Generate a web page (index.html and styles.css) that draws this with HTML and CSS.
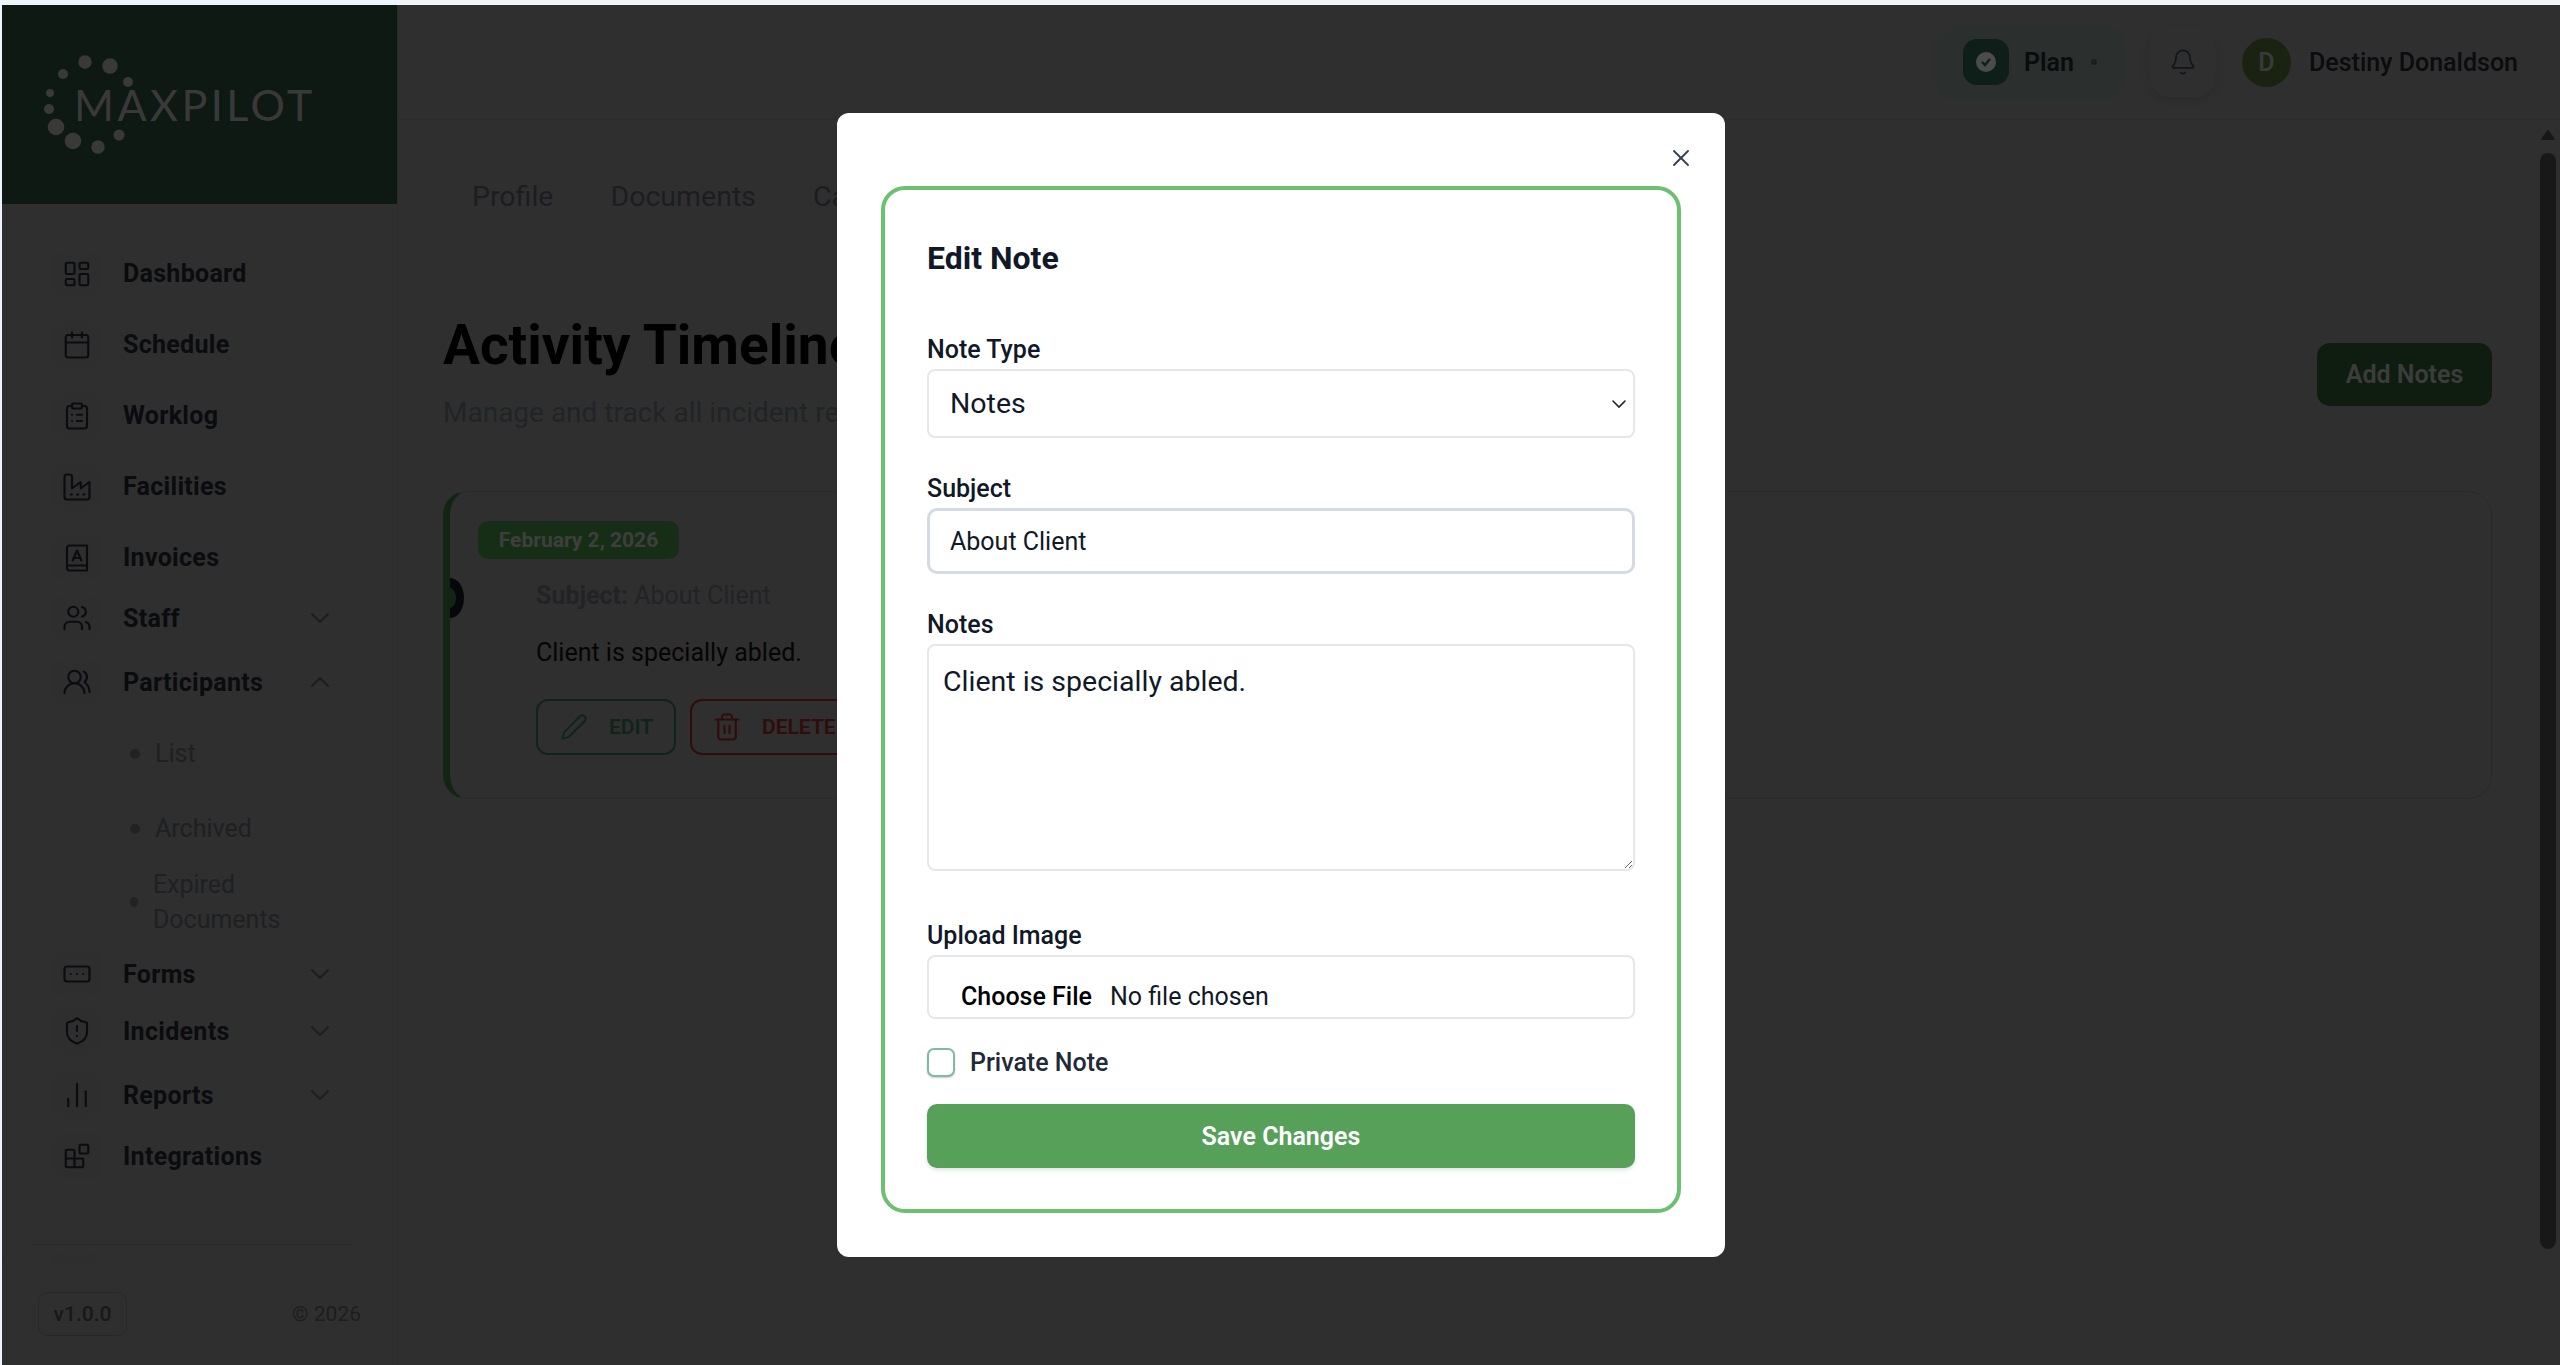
FILE: index.html
```html
<!DOCTYPE html>
<html>
<head>
    <title>MaxPilot - Activity Timeline</title>
    <link rel="stylesheet" href="styles.css">
</head>
<body>
    <div class="app">
        <aside class="sidebar">
            <div class="logo">
                <svg class="logo-dots" viewBox="40 54 96 102" fill="currentColor">
                    <circle cx="85" cy="62" r="6.7"/><circle cx="110" cy="66" r="7.7"/><circle cx="128" cy="82" r="5"/>
                    <circle cx="63" cy="74" r="5"/><circle cx="50" cy="93" r="4"/><circle cx="49" cy="109" r="5"/>
                    <circle cx="56" cy="127" r="8.3"/><circle cx="73" cy="141" r="8.3"/><circle cx="98" cy="147" r="6.7"/>
                    <circle cx="119" cy="135" r="5.5"/>
                </svg>
                <span class="logo-text">MAXPILOT</span>
            </div>
            <nav class="nav">
                <a class="nav-item">
                    <span class="nav-icon"><svg viewBox="0 0 24 24"><rect x="3" y="3" width="7" height="9" rx="1"/><rect x="14" y="3" width="7" height="5" rx="1"/><rect x="14" y="12" width="7" height="9" rx="1"/><rect x="3" y="16" width="7" height="5" rx="1"/></svg></span>
                    Dashboard
                </a>
                <a class="nav-item">
                    <span class="nav-icon"><svg viewBox="0 0 24 24"><path d="M8 2v4"/><path d="M16 2v4"/><rect x="3" y="4" width="18" height="18" rx="2"/><path d="M3 10h18"/></svg></span>
                    Schedule
                </a>
                <a class="nav-item">
                    <span class="nav-icon"><svg viewBox="0 0 24 24"><rect x="8" y="2" width="8" height="4" rx="1"/><path d="M16 4h2a2 2 0 0 1 2 2v14a2 2 0 0 1-2 2H6a2 2 0 0 1-2-2V6a2 2 0 0 1 2-2h2"/><path d="M12 11h4"/><path d="M12 16h4"/><path d="M8 11h.01"/><path d="M8 16h.01"/></svg></span>
                    Worklog
                </a>
                <a class="nav-item">
                    <span class="nav-icon"><svg viewBox="0 0 24 24"><path d="M2 20a2 2 0 0 0 2 2h16a2 2 0 0 0 2-2V8l-7 5V8l-7 5V4a2 2 0 0 0-2-2H4a2 2 0 0 0-2 2Z"/><path d="M17 18h1"/><path d="M12 18h1"/><path d="M7 18h1"/></svg></span>
                    Facilities
                </a>
                <a class="nav-item">
                    <span class="nav-icon"><svg viewBox="0 0 24 24"><path d="M4 4a2 2 0 0 1 2-2h14v20H6a2 2 0 0 1-2-2Z"/><path d="M4 18h16"/><path d="m8.500 14 3.500-8 3.500 8"/><path d="M9.800 12h4.400"/></svg></span>
                    Invoices
                </a>
                <a class="nav-item nav-group">
                    <span class="nav-icon nav-icon-box"><svg viewBox="0 0 24 24"><path d="M16 21v-2a4 4 0 0 0-4-4H6a4 4 0 0 0-4 4v2"/><circle cx="9" cy="7" r="4"/><path d="M22 21v-2a4 4 0 0 0-3-3.870"/><path d="M16 3.130a4 4 0 0 1 0 7.750"/></svg></span>
                    Staff
                    <svg class="chevron" viewBox="0 0 24 24"><path d="m6 9 6 6 6-6"/></svg>
                </a>
                <a class="nav-item nav-group mt-16">
                    <span class="nav-icon nav-icon-box"><svg viewBox="0 0 24 24"><path d="M18 21a8 8 0 0 0-16 0"/><circle cx="10" cy="8" r="5"/><path d="M22 20c0-3.370-2-6.500-4-8a5 5 0 0 0-.45-8.300"/></svg></span>
                    Participants
                    <svg class="chevron" viewBox="0 0 24 24"><path d="m18 15-6-6-6 6"/></svg>
                </a>
                <div class="sub-list">
                    <a class="sub-item"><span class="sub-dot"></span><span>List</span></a>
                    <a class="sub-item"><span class="sub-dot"></span><span>Archived</span></a>
                    <a class="sub-item sub-item-wrap"><span class="sub-dot"></span><span>Expired Documents</span></a>
                </div>
                <a class="nav-item nav-group mt-13">
                    <span class="nav-icon nav-icon-box"><svg viewBox="0 0 24 24"><rect x="2" y="6" width="20" height="12" rx="2"/><path d="M12 12h.01"/><path d="M17 12h.01"/><path d="M7 12h.01"/></svg></span>
                    Forms
                    <svg class="chevron" viewBox="0 0 24 24"><path d="m6 9 6 6 6-6"/></svg>
                </a>
                <a class="nav-item nav-group mt-9">
                    <span class="nav-icon nav-icon-box"><svg viewBox="0 0 24 24"><path d="M20 13c0 5-3.500 7.500-7.660 8.950a1 1 0 0 1-.67-.01C7.500 20.500 4 18 4 13V6a1 1 0 0 1 1-1c2 0 4.500-1.200 6.240-2.720a1.170 1.170 0 0 1 1.520 0C14.510 3.810 17 5 19 5a1 1 0 0 1 1 1z"/><path d="M12 8v4"/><path d="M12 16h.01"/></svg></span>
                    Incidents
                    <svg class="chevron" viewBox="0 0 24 24"><path d="m6 9 6 6 6-6"/></svg>
                </a>
                <a class="nav-item nav-group mt-16">
                    <span class="nav-icon nav-icon-box"><svg viewBox="0 0 24 24"><path d="M5 21v-6"/><path d="M12 21V3"/><path d="M19 21V9"/></svg></span>
                    Reports
                    <svg class="chevron" viewBox="0 0 24 24"><path d="m6 9 6 6 6-6"/></svg>
                </a>
                <a class="nav-item nav-group mt-13">
                    <span class="nav-icon nav-icon-box"><svg viewBox="0 0 24 24"><rect x="14" y="3" width="7" height="7" rx="1"/><path d="M10 21V8a1 1 0 0 0-1-1H4a1 1 0 0 0-1 1v12a1 1 0 0 0 1 1h12a1 1 0 0 0 1-1v-5a1 1 0 0 0-1-1H3"/></svg></span>
                    Integrations
                </a>
                <div class="nav-divider"></div>
                <div class="nav-clipped"></div>
            </nav>
            <div class="sidebar-footer">
                <span class="version">v1.0.0</span>
                <span class="copyright">© 2026</span>
            </div>
        </aside>

        <div class="main">
            <header class="topbar">
                <div class="plan">
                    <span class="plan-icon"><svg viewBox="0 0 24 24"><circle cx="12" cy="12" r="10" class="plan-disc"/><path d="m8 12 3 3 5-6" class="plan-check"/></svg></span>
                    <span class="plan-name">Plan</span>
                    <span class="plan-dot"></span>
                </div>
                <button class="bell"><svg viewBox="0 0 24 24"><path d="M10.268 21a2 2 0 0 0 3.464 0"/><path d="M3.262 15.326A1 1 0 0 0 4 17h16a1 1 0 0 0 .74-1.673C19.410 13.956 18 12.499 18 8A6 6 0 0 0 6 8c0 4.499-1.411 5.956-2.738 7.326"/></svg></button>
                <span class="avatar">D</span>
                <span class="user-name">Destiny Donaldson</span>
            </header>

            <div class="body-row">
                <section class="content">
                    <div class="tabs">
                        <a>Profile</a>
                        <a>Documents</a>
                        <a>Calendar</a>
                    </div>
                    <div class="page-head">
                        <div>
                            <h1>Activity Timeline</h1>
                            <p class="subtitle">Manage and track all incident reports</p>
                        </div>
                        <button class="add-btn">Add Notes</button>
                    </div>
                    <article class="note-card">
                        <span class="timeline-dot"></span>
                        <span class="date-badge">February 2, 2026</span>
                        <div class="note-body">
                            <p class="note-subject"><b>Subject:</b> About Client</p>
                            <p class="note-text">Client is specially abled.</p>
                            <div class="note-actions">
                                <button class="action-btn action-edit">
                                    <svg viewBox="0 0 24 24"><path d="M21.174 6.812a1 1 0 0 0-3.986-3.987L3.842 16.174a2 2 0 0 0-.5.83l-1.321 4.352a.5.5 0 0 0 .623.622l4.353-1.320a2 2 0 0 0 .83-.497z"/></svg>
                                    EDIT
                                </button>
                                <button class="action-btn action-delete">
                                    <svg viewBox="0 0 24 24"><path d="M3 6h18"/><path d="M19 6v14c0 1-1 2-2 2H7c-1 0-2-1-2-2V6"/><path d="M8 6V4c0-1 1-2 2-2h4c1 0 2 1 2 2v2"/><path d="M10 11v6"/><path d="M14 11v6"/></svg>
                                    DELETE
                                </button>
                            </div>
                        </div>
                    </article>
                </section>
                <div class="rail">
                    <svg class="rail-arrow" viewBox="0 0 16 12"><path d="M8 2 14 10H2Z"/></svg>
                    <div class="rail-thumb"></div>
                </div>
            </div>
        </div>

        <div class="overlay">
            <div class="modal">
                <button class="modal-close"><svg viewBox="0 0 24 24"><path d="M18 6 6 18"/><path d="m6 6 12 12"/></svg></button>
                <form class="note-form">
                    <h2>Edit Note</h2>
                    <div class="field">
                        <label for="noteType">Note Type</label>
                        <select id="noteType" class="control control-large">
                            <option>Notes</option>
                        </select>
                    </div>
                    <div class="field">
                        <label for="noteSubject">Subject</label>
                        <input id="noteSubject" class="control control-active" type="text" value="About Client">
                    </div>
                    <div class="field field-notes">
                        <label for="noteText">Notes</label>
                        <textarea id="noteText" class="control control-area">Client is specially abled.</textarea>
                    </div>
                    <div class="field field-file">
                        <label for="noteImage">Upload Image</label>
                        <input id="noteImage" class="control control-file" type="file">
                    </div>
                    <label class="check-row"><input type="checkbox"> Private Note</label>
                    <button type="button" class="save-btn">Save Changes</button>
                </form>
            </div>
        </div>
    </div>
</body>
</html>
```

FILE: styles.css
```css
* {
    box-sizing: border-box;
}
html, body {
    height: 100%;
}
body {
    margin: 0;
    padding: 5px 0 0 2px;
    background-color: #eef5fa;
    font-family: Roboto, "Liberation Sans", sans-serif;
    font-size: 25px;
    color: #111827;
    overflow: hidden;
}
button {
    font-family: inherit;
    cursor: pointer;
}
h1, h2, p {
    margin: 0;
}
.app {
    position: relative;
    display: flex;
    height: 100%;
    background-color: #9d9d9d;
}

/* sidebar */
.sidebar {
    display: flex;
    flex-direction: column;
    flex: none;
    width: 396px;
    border-right: 1px solid #939496;
}
.logo {
    display: flex;
    align-items: center;
    flex: none;
    height: 199px;
    padding-left: 38px;
    background-color: #2f5643;
    color: #bfbfbf;
}
.logo-dots {
    flex: none;
    width: 96px;
    height: 102px;
}
.logo-text {
    margin-left: -62px;
    font-family: Lato, sans-serif;
    font-size: 43px;
    letter-spacing: 3.5px;
    line-height: 1;
}
.nav {
    flex: 1;
    min-height: 0;
    padding-top: 34px;
    overflow: hidden;
}
.nav-item {
    display: flex;
    align-items: center;
    gap: 22px;
    width: 283px;
    height: 71px;
    margin-left: 51px;
    font-weight: 700;
    letter-spacing: .3px;
    color: #222832;
}
.nav-group {
    height: 48px;
    margin-top: 1px;
}
.mt-9 { margin-top: 9px; }
.mt-13 { margin-top: 13px; }
.mt-16 { margin-top: 16px; }
.nav-icon {
    display: flex;
    align-items: center;
    justify-content: center;
    flex: none;
    width: 48px;
    height: 48px;
    border-radius: 14px;
    background-color: #9a9a9a;
}
.nav-icon svg {
    width: 30px;
    height: 30px;
    fill: none;
    stroke: #222832;
    stroke-width: 1.7;
    stroke-linecap: round;
    stroke-linejoin: round;
}
.chevron {
    flex: none;
    width: 32px;
    height: 32px;
    margin-left: auto;
    fill: none;
    stroke: #606468;
    stroke-width: 1.5;
    stroke-linecap: round;
    stroke-linejoin: round;
}
.sub-list {
    margin-top: 10px;
}
.sub-item {
    display: flex;
    align-items: center;
    gap: 15px;
    width: 193px;
    height: 75px;
    margin-left: 128px;
    line-height: 35px;
    color: #666b74;
}
.sub-item-wrap {
    height: 70px;
    margin-top: 1px;
}
.sub-dot {
    width: 10px;
    height: 10px;
    border-radius: 50%;
    background-color: #6f7379;
}
.nav-divider {
    width: 325px;
    height: 1px;
    margin: 64px 0 5px 28px;
    background-color: #8c8d8f;
}
.nav-clipped {
    width: 48px;
    height: 48px;
    margin-left: 51px;
    border-radius: 14px;
    background-color: #9a9a9a;
}
.sidebar-footer {
    display: flex;
    justify-content: space-between;
    align-items: flex-start;
    flex: none;
    height: 103px;
    padding: 29px 36px 0;
    border-top: 1px solid #939496;
    font-size: 21px;
}
.version {
    display: flex;
    align-items: center;
    justify-content: center;
    width: 89px;
    height: 44px;
    border: 1px solid #858689;
    border-radius: 10px;
    font-weight: 500;
    color: #50535a;
}
.copyright {
    margin-top: 10px;
    color: #606468;
}

/* main */
.main {
    display: flex;
    flex-direction: column;
    flex: 1;
    min-width: 0;
}
.topbar {
    display: flex;
    justify-content: flex-end;
    align-items: center;
    flex: none;
    height: 115px;
    padding-right: 42px;
    border-bottom: 1px solid #949596;
}
.plan {
    display: flex;
    align-items: center;
    width: 191px;
    height: 77px;
    padding-left: 28px;
    border-radius: 22px;
    background-color: #8f9e96;
}
.plan-icon {
    display: flex;
    align-items: center;
    justify-content: center;
    width: 46px;
    height: 46px;
    border-radius: 14px;
    background-color: #2f6650;
}
.plan-icon svg {
    width: 24px;
    height: 24px;
}
.plan-disc {
    fill: #fff;
}
.plan-check {
    fill: none;
    stroke: #2f6650;
    stroke-width: 2.4;
}
.plan-name {
    margin-left: 15px;
    font-weight: 600;
    color: #222832;
}
.plan-dot {
    width: 6px;
    height: 6px;
    margin-left: 17px;
    border-radius: 50%;
    background-color: #606468;
}
.bell {
    display: flex;
    align-items: center;
    justify-content: center;
    width: 65px;
    height: 69px;
    margin-left: 24px;
    padding: 0;
    border: 1px solid #a2a2a2;
    border-radius: 20px;
    background-color: #9d9d9d;
    box-shadow: 0 3px 8px rgba(0, 0, 0, .1);
}
.bell svg {
    width: 28px;
    height: 28px;
    fill: none;
    stroke: #3d4756;
    stroke-width: 1.5;
    stroke-linecap: round;
    stroke-linejoin: round;
}
.avatar {
    display: flex;
    align-items: center;
    justify-content: center;
    width: 49px;
    height: 49px;
    margin-left: 27px;
    border-radius: 50%;
    background-color: #58773b;
    font-weight: 500;
    color: #c4c4c4;
}
.user-name {
    margin-left: 18px;
    font-weight: 500;
    color: #222832;
}
.body-row {
    display: flex;
    flex: 1;
    min-height: 0;
}
.content {
    flex: 1;
    min-width: 0;
    padding: 61px 48px 0 45px;
}
.tabs {
    display: flex;
    gap: 57px;
    padding-left: 29px;
    font-size: 28.500px;
    line-height: 32px;
    color: #5d6370;
}
.page-head {
    display: flex;
    justify-content: space-between;
    align-items: center;
    margin-top: 100px;
}
h1 {
    font-size: 55px;
    font-weight: 700;
    line-height: 64px;
    color: #000;
}
.subtitle {
    margin-top: 18px;
    font-size: 28px;
    line-height: 36px;
    color: #717884;
}
.add-btn {
    width: 175px;
    height: 63px;
    margin-top: 4px;
    border: none;
    border-radius: 13px;
    background-color: #2f6334;
    font-size: 25px;
    font-weight: 600;
    color: #c8c8c8;
}
.note-card {
    position: relative;
    height: 308px;
    margin-top: 60px;
    padding: 29px 0 0 28px;
    border: 1px solid #8a8c8e;
    border-left: 7px solid #3f7d3f;
    border-radius: 24px;
}
.timeline-dot {
    position: absolute;
    left: 0;
    top: 86px;
    width: 14px;
    height: 40px;
    border-radius: 0 100% 100% 0 / 0 50% 50% 0;
    background-color: #111827;
}
.timeline-dot::after {
    content: "";
    position: absolute;
    left: 0;
    top: 10px;
    width: 6px;
    height: 20px;
    border-radius: 0 100% 100% 0 / 0 50% 50% 0;
    background-color: #3f7d3f;
}
.date-badge {
    display: inline-block;
    width: 201px;
    height: 38px;
    border-radius: 10px;
    background-color: #4a9a47;
    font-size: 21px;
    font-weight: 700;
    line-height: 38px;
    text-align: center;
    color: #d0d0d0;
}
.note-body {
    margin: 21px 0 0 58px;
}
.note-subject {
    line-height: 32px;
    color: #717680;
}
.note-subject b {
    font-weight: 700;
}
.note-text {
    margin-top: 25px;
    line-height: 32px;
    color: #111;
}
.note-actions {
    display: flex;
    gap: 14px;
    margin-top: 30px;
}
.action-btn {
    display: flex;
    align-items: center;
    height: 56px;
    border-width: 2px;
    border-style: solid;
    border-radius: 12px;
    background-color: #9d9d9d;
    font-size: 21px;
    font-weight: 600;
}
.action-btn svg {
    fill: none;
    stroke: currentColor;
    stroke-width: 1.7;
    stroke-linecap: round;
    stroke-linejoin: round;
}
.action-edit {
    gap: 21px;
    width: 140px;
    padding-left: 22px;
    color: #357a5c;
    border-color: #357a5c;
}
.action-edit svg {
    width: 28px;
    height: 28px;
}
.action-delete {
    gap: 20px;
    width: 170px;
    padding-left: 20px;
    color: #a02b25;
    border-color: #a02b25;
}
.action-delete svg {
    width: 30px;
    height: 30px;
}
.rail {
    flex: none;
    width: 20px;
    padding: 9px 4px 0 0;
}
.rail-arrow {
    display: block;
    width: 16px;
    height: 12px;
    fill: #535353;
    stroke: #535353;
    stroke-width: 2;
    stroke-linejoin: round;
}
.rail-thumb {
    width: 16px;
    height: 1096px;
    margin-top: 12px;
    border-radius: 8px;
    background-color: #535353;
}

/* modal */
.overlay {
    position: absolute;
    inset: 0;
    display: flex;
    align-items: center;
    justify-content: center;
    background-color: rgba(0, 0, 0, .7);
}
.modal {
    position: relative;
    width: 888px;
    height: 1144px;
    padding: 73px 44px 0 44px;
    border-radius: 12px;
    background-color: #fff;
}
.modal-close {
    position: absolute;
    top: 31px;
    right: 30px;
    width: 28px;
    height: 28px;
    padding: 0;
    border: none;
    background: none;
}
.modal-close svg {
    display: block;
    width: 28px;
    height: 28px;
    fill: none;
    stroke: #374151;
    stroke-width: 1.6;
    stroke-linecap: round;
}
.note-form {
    height: 1027px;
    padding: 50px 42px 0;
    border: 4px solid #6cc070;
    border-radius: 24px;
}
h2 {
    margin-bottom: 59px;
    font-size: 32px;
    font-weight: 700;
    line-height: 36px;
    color: #111827;
}
.field {
    margin-bottom: 36px;
}
.field-notes {
    margin-bottom: 50px;
}
.field-file {
    margin-bottom: 29px;
}
.field label {
    display: block;
    margin-bottom: 4px;
    font-weight: 500;
    line-height: 30px;
    color: #111827;
}
.control {
    display: block;
    width: 100%;
    border: 2px solid #e5e7eb;
    border-radius: 8px;
    background-color: #fff;
    font-family: inherit;
    font-size: 25px;
    color: #111827;
    outline: none;
}
.control-large {
    appearance: none;
    height: 69px;
    padding-left: 21px;
    font-size: 28.500px;
    background-image: url("data:image/svg+xml,%3Csvg xmlns='http://www.w3.org/2000/svg' viewBox='0 0 16 10' fill='none' stroke='%23222' stroke-width='1.600' stroke-linecap='round'%3E%3Cpath d='M2 2l6 6 6-6'/%3E%3C/svg%3E");
    background-repeat: no-repeat;
    background-position: right 6px center;
    background-size: 16px 10px;
}
.control-active {
    height: 66px;
    padding-left: 20px;
    border: 3px solid #d5dbe3;
    border-radius: 10px;
}
.control-area {
    height: 227px;
    padding: 18px 14px;
    font-size: 28.500px;
    line-height: 36px;
}
.control-file {
    height: 64px;
    padding: 25px 0 0 32px;
    overflow: hidden;
}
.control-file::file-selector-button {
    margin-right: 18px;
    padding: 0;
    border: none;
    background: none;
    font-family: inherit;
    font-size: 25px;
    font-weight: 500;
    color: #000;
}
.check-row {
    display: flex;
    align-items: center;
    gap: 15px;
    height: 29px;
    font-weight: 500;
    color: #1f2937;
}
.check-row input {
    appearance: none;
    flex: none;
    width: 28px;
    height: 29px;
    margin: 0;
    border: 2px solid #7fbba3;
    border-radius: 7px;
    background-color: #fff;
    box-shadow: 0 1px 2px rgba(0, 0, 0, .2);
}
.save-btn {
    display: block;
    width: 100%;
    height: 64px;
    margin-top: 27px;
    border: none;
    border-radius: 10px;
    background-color: #57a05a;
    box-shadow: 0 2px 4px rgba(0, 0, 0, .12);
    font-size: 25px;
    font-weight: 600;
    color: #fff;
}
```
